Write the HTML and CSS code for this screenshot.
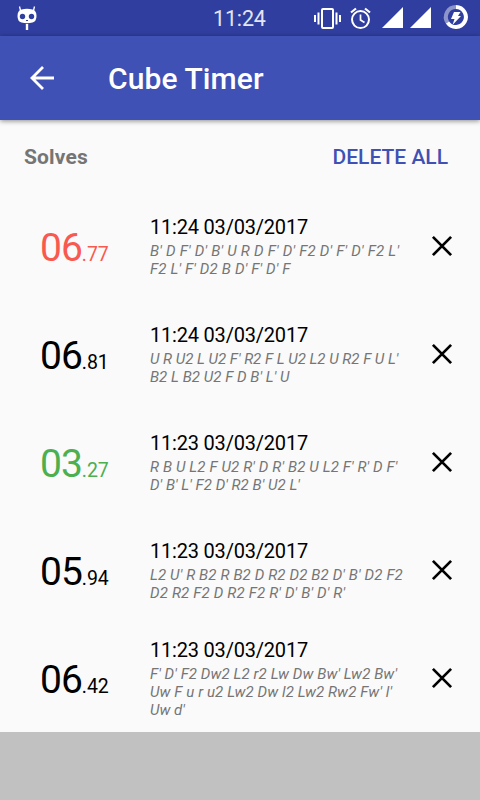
FILE: index.html
```html
<!DOCTYPE html>
<html lang="en">
<head>
<meta charset="utf-8">
<title>Cube Timer</title>
<link rel="stylesheet" href="styles.css">
</head>
<body>
<div class="status">
  <svg class="cid" width="20" height="26" viewBox="0 0 20 26"><path d="M2.500 1.500l1 4M17.500 1.500l-1 4" stroke="#fff" stroke-width="1.300" fill="none"/><path d="M4.500 4.500Q10 3 15.500 4.500Q19.500 5.500 19.500 11Q19.500 16.500 15.500 17.500Q10 19 4.500 17.500Q.5 16.500 .5 11Q.5 5.500 4.500 4.500Z" fill="#fff"/><circle cx="5.500" cy="11.500" r="2.700" fill="#303f9f"/><circle cx="14.500" cy="11.500" r="2.700" fill="#303f9f"/><path d="M9 15.500h2" stroke="#303f9f"/><path d="M10 19v6" stroke="#fff" stroke-width="2.400"/></svg>
  <span class="clock">11:24</span>
  <svg class="tray" width="180" height="36" viewBox="0 0 180 36"><g fill="none" stroke="#fff"><rect x="22" y="9" width="11" height="19" rx="1" stroke-width="2"/><path d="M18.500 12.500v12M36.500 12.500v12" stroke-width="2"/><path d="M15 15v7M40 15v7" stroke-width="2"/><circle cx="60.500" cy="19.600" r="8.500" stroke-width="2"/><path d="M60.500 14.500v5.500l4 2.500" stroke-width="1.700"/><path d="M51 12.500l5-4M70 12.500l-5-4" stroke-width="2.200"/><path d="M156 7a10 10 0 1 1-8.500 15.500" stroke-width="4"/><path d="M147.500 22.500a10 10 0 0 1 8.500-15.500" stroke-width="4" opacity=".45"/></g><g fill="#fff"><path d="M82 28L103 7v21zM110 28L131 7v21z"/><path d="M154 12h6.500l-2.500 4h3l-8.500 9 2-6h-3.500z"/></g></svg>
</div>
<header class="bar">
  <svg width="24" height="24" viewBox="0 0 24 24"><path d="M24 12H2M13 1L2 12l11 11" fill="none" stroke="#fff" stroke-width="2.800"/></svg>
  <h1>Cube Timer</h1>
</header>
<main>
  <div class="heading"><h2>Solves</h2><button>DELETE ALL</button></div>
  <div class="row worst"><div class="time">06<small>.77</small></div><div class="info"><div class="date">11:24 03/03/2017</div><div class="moves"><span class="wide">B' D F' D' B' U R D F' D' F2 D' F' D' F2 L'</span><br><span class="loose">F2 L' F' D2 B D' F' D' F</span></div></div><svg class="x" viewBox="0 0 22 22"><path d="M1 1l20 20M21 1L1 21"/></svg></div>
  <div class="row"><div class="time">06<small>.81</small></div><div class="info"><div class="date">11:24 03/03/2017</div><div class="moves">U R U2 L U2 F' R2 F L U2 L2 U R2 F U L'<br><span class="snug">B2 L B2 U2 F D B' L' U</span></div></div><svg class="x" viewBox="0 0 22 22"><path d="M1 1l20 20M21 1L1 21"/></svg></div>
  <div class="row best"><div class="time">03<small>.27</small></div><div class="info"><div class="date">11:23 03/03/2017</div><div class="moves"><span class="open">R B U L2 F U2 R' D R' B2 U L2 F' R' D F'</span><br><span class="snug">D' B' L' F2 D' R2 B' U2 L'</span></div></div><svg class="x" viewBox="0 0 22 22"><path d="M1 1l20 20M21 1L1 21"/></svg></div>
  <div class="row"><div class="time">05<small>.94</small></div><div class="info"><div class="date">11:23 03/03/2017</div><div class="moves"><span class="open">L2 U' R B2 R B2 D R2 D2 B2 D' B' D2 F2</span><br><span class="loose">D2 R2 F2 D R2 F2 R' D' B' D' R'</span></div></div><svg class="x" viewBox="0 0 22 22"><path d="M1 1l20 20M21 1L1 21"/></svg></div>
  <div class="row"><div class="time">06<small>.42</small></div><div class="info"><div class="date">11:23 03/03/2017</div><div class="moves"><span class="even">F' D' F2 Dw2 L2 r2 Lw Dw Bw' Lw2 Bw'</span><br><span class="even">Uw F u r u2 Lw2 Dw l2 Lw2 Rw2 Fw' l'</span><br>Uw d'</div></div><svg class="x" viewBox="0 0 22 22"><path d="M1 1l20 20M21 1L1 21"/></svg></div>
</main>
<div class="ad"></div>
</body>
</html>
```
FILE: styles.css
```css
* { box-sizing: border-box; }
body {
  margin: 0;
  width: 480px;
  height: 800px;
  overflow: hidden;
  display: flex;
  flex-direction: column;
  background: #fafafa;
  color: #000;
  font-family: Roboto, sans-serif;
}
.status {
  height: 36px;
  flex: none;
  display: flex;
  background: #303f9f;
  color: #e3e5f3;
}
.cid { margin: 5px 0 0 17px; }
.clock {
  width: 87px;
  margin-left: 176px;
  font-size: 21.5px;
  letter-spacing: -.15px;
  line-height: 37px;
}
.tray { flex: none; }
.bar {
  height: 84px;
  flex: none;
  display: flex;
  align-items: center;
  padding-left: 30px;
  background: #3f51b5;
  color: #fff;
  box-shadow: 0 1px 5px rgba(0, 0, 0, .45);
  z-index: 1;
}
h1 {
  margin: 1px 0 0 54px;
  font-size: 30px;
  font-weight: 500;
  letter-spacing: .1px;
  line-height: 36px;
}
main {
  height: 612px;
  flex: none;
  overflow: hidden;
}
.heading {
  height: 73px;
  display: flex;
  justify-content: space-between;
  align-items: center;
  padding: 0 32px 0 24px;
}
h2 {
  margin: 0;
  color: #757575;
  font-size: 21px;
  font-weight: 700;
  letter-spacing: .15px;
}
button {
  padding: 0;
  border: 0;
  background: none;
  color: #3f51b5;
  font: 500 21px Roboto, sans-serif;
}
.row {
  height: 108px;
  display: flex;
  align-items: center;
}
.time {
  width: 110px;
  margin-left: 40px;
  padding-top: 8px;
  font-size: 39px;
  line-height: 46px;
  letter-spacing: -1px;
}
.time small {
  font-size: 19.5px;
  letter-spacing: -.1px;
}
.info {
  width: 282px;
  flex: none;
  white-space: nowrap;
}
.date {
  margin-top: -1px;
  font-size: 20px;
  letter-spacing: -.2px;
  line-height: 23px;
}
.moves {
  padding-top: 3px;
  margin-bottom: -1px;
  color: #757575;
  font-size: 15px;
  font-style: italic;
  line-height: 18px;
}
.snug { letter-spacing: .05px; }
.even { letter-spacing: .1px; }
.open { letter-spacing: .14px; }
.loose { letter-spacing: .18px; }
.wide { letter-spacing: .24px; }
.x {
  width: 20px;
  height: 20px;
  margin-bottom: 2px;
  overflow: visible;
  fill: none;
  stroke: #000;
  stroke-width: 3;
}
.worst .time { color: #f85a50; }
.best .time { color: #4caf50; }
.ad {
  flex: 1;
  background: #c1c1c1;
}
```
